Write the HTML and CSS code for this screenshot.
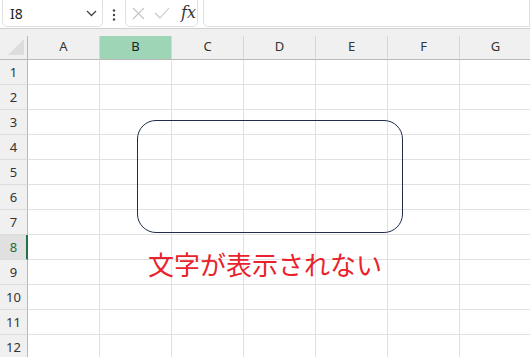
FILE: index.html
```html
<!DOCTYPE html>
<html lang="ja">
<head>
<meta charset="utf-8">
<link rel="stylesheet" href="styles.css">
</head>
<body>
<div class="app">
  <div class="toolbar">
    <div class="namebox">
      <span class="name">I8</span>
      <svg class="chev" width="11" height="7" viewBox="0 0 11 7"><path d="M1 1 L5.5 5.5 L10 1" fill="none" stroke="#444" stroke-width="1.3"/></svg>
    </div>
    <div class="dots">
      <svg width="4" height="12" viewBox="0 0 4 12"><circle cx="2" cy="1.5" r="1.2" fill="#444"/><circle cx="2" cy="6" r="1.2" fill="#444"/><circle cx="2" cy="10.5" r="1.2" fill="#444"/></svg>
    </div>
    <div class="fxbox">
      <svg width="13" height="13" viewBox="0 0 13 13"><path d="M1 1 L12 12 M12 1 L1 12" stroke="#c4c4c4" stroke-width="1.1" fill="none"/></svg>
      <svg width="16" height="12" viewBox="0 0 16 12"><path d="M1 6 L6 11 L15 1" stroke="#c4c4c4" stroke-width="1.1" fill="none"/></svg>
      <span class="fx">fx</span>
    </div>
    <div class="formula"></div>
  </div>
  <div class="gap"></div>
  <div class="sheet">
    <div class="hc corner"><span class="tri"></span></div>
    <div class="hc col">A</div>
    <div class="hc col sel">B</div>
    <div class="hc col">C</div>
    <div class="hc col">D</div>
    <div class="hc col">E</div>
    <div class="hc col">F</div>
    <div class="hc col">G</div>

    <div class="rh">1</div><div class="c"></div><div class="c"></div><div class="c"></div><div class="c"></div><div class="c"></div><div class="c"></div><div class="c"></div>
    <div class="rh">2</div><div class="c"></div><div class="c"></div><div class="c"></div><div class="c"></div><div class="c"></div><div class="c"></div><div class="c"></div>
    <div class="rh">3</div><div class="c"></div><div class="c"></div><div class="c"></div><div class="c"></div><div class="c"></div><div class="c"></div><div class="c"></div>
    <div class="rh">4</div><div class="c"></div><div class="c"></div><div class="c"></div><div class="c"></div><div class="c"></div><div class="c"></div><div class="c"></div>
    <div class="rh">5</div><div class="c"></div><div class="c"></div><div class="c"></div><div class="c"></div><div class="c"></div><div class="c"></div><div class="c"></div>
    <div class="rh">6</div><div class="c"></div><div class="c"></div><div class="c"></div><div class="c"></div><div class="c"></div><div class="c"></div><div class="c"></div>
    <div class="rh">7</div><div class="c"></div><div class="c"></div><div class="c"></div><div class="c"></div><div class="c"></div><div class="c"></div><div class="c"></div>
    <div class="rh selrow">8</div><div class="c"></div><div class="c"></div><div class="c"></div><div class="c"></div><div class="c"></div><div class="c"></div><div class="c"></div>
    <div class="rh">9</div><div class="c"></div><div class="c"></div><div class="c"></div><div class="c"></div><div class="c"></div><div class="c"></div><div class="c"></div>
    <div class="rh">10</div><div class="c"></div><div class="c"></div><div class="c"></div><div class="c"></div><div class="c"></div><div class="c"></div><div class="c"></div>
    <div class="rh">11</div><div class="c"></div><div class="c"></div><div class="c"></div><div class="c"></div><div class="c"></div><div class="c"></div><div class="c"></div>
    <div class="rh">12</div><div class="c"></div><div class="c"></div><div class="c"></div><div class="c"></div><div class="c"></div><div class="c"></div><div class="c"></div>
  </div>
  <div class="shape"></div>
  <div class="note">文字が表示されない</div>
</div>
</body>
</html>
```

FILE: styles.css
```css
html, body {
  margin: 0;
  padding: 0;
  background: #fff;
  overflow: hidden;
}
body {
  font-family: "Noto Sans", "Liberation Sans", "Noto Sans CJK JP", sans-serif;
  color: #333;
}
.app {
  position: relative;
  width: 530px;
  height: 357px;
  overflow: hidden;
}
.toolbar {
  display: flex;
  align-items: flex-end;
  height: 28px;
  background: #fff;
  border-bottom: 1px solid #d0d0d0;
  padding-left: 2px;
}
.namebox {
  box-sizing: border-box;
  width: 101px;
  height: 32px;
  margin-bottom: 1px;
  border: 1px solid #e0e0e0;
  border-radius: 5px;
  display: flex;
  align-items: center;
  justify-content: space-between;
  padding: 4px 5px 0 7px;
}
.name {
  font-family: "Noto Sans", "Liberation Sans", sans-serif;
  font-size: 14px;
  color: #222;
}
.chev {
  margin-top: 1px;
}
.dots {
  width: 22px;
  height: 27px;
  display: flex;
  align-items: center;
  justify-content: center;
}
.fxbox {
  box-sizing: border-box;
  width: 73px;
  height: 32px;
  margin-bottom: 1px;
  border: 1px solid #e0e0e0;
  border-radius: 5px;
  display: flex;
  align-items: center;
  gap: 9px;
  padding: 4px 0 0 6px;
}
.fx {
  font-family: "DejaVu Serif", "Liberation Serif", serif;
  font-style: italic;
  font-size: 16px;
  color: #333;
  margin-left: 2px;
  margin-top: -2px;
}
.formula {
  flex: 1;
  height: 32px;
  margin-left: 5px;
  margin-bottom: 1px;
  box-sizing: border-box;
  border: 1px solid #e0e0e0;
  border-radius: 5px 0 0 5px;
}
.gap {
  height: 7px;
  background: #f0f0f0;
}
.sheet {
  display: grid;
  grid-template-columns: 28px repeat(7, 72px);
  grid-template-rows: 24px repeat(12, 25px);
}
.hc {
  box-sizing: border-box;
  background: #f0f0f0;
  border-right: 1px solid #d6d6d6;
  border-bottom: 1px solid #b8b8b8;
  font-size: 13px;
  color: #333;
  display: flex;
  align-items: center;
  justify-content: center;
  padding-bottom: 4px;
}
.corner {
  border-right: 1px solid #b8b8b8;
  position: relative;
}
.tri {
  position: absolute;
  left: 8px;
  top: 3px;
  width: 16px;
  height: 16px;
  background: #dcdcdc;
  clip-path: polygon(100% 0, 100% 100%, 0 100%);
}
.sel {
  background: #9fd5b7;
  color: #222;
}
.rh {
  box-sizing: border-box;
  background: #f0f0f0;
  border-right: 1px solid #b8b8b8;
  border-bottom: 1px solid #dcdcdc;
  font-size: 13px;
  color: #333;
  display: flex;
  align-items: center;
  justify-content: center;
  padding-bottom: 1px;
}
.selrow {
  background: #e0e0e0;
  border-right: 2px solid #217346;
  padding-left: 1px;
  color: #1e6b44;
}
.c {
  box-sizing: border-box;
  border-right: 1px solid #e1e1e1;
  border-bottom: 1px solid #e1e1e1;
}
.shape {
  position: absolute;
  left: 137px;
  top: 120px;
  width: 266px;
  height: 113px;
  box-sizing: border-box;
  border: 1.4px solid #1f2d4a;
  border-radius: 19px;
}
.note {
  position: absolute;
  left: 148px;
  top: 247px;
  font-family: "Noto Sans CJK JP", sans-serif;
  font-size: 26px;
  line-height: 34px;
  color: #e8232b;
}
```
